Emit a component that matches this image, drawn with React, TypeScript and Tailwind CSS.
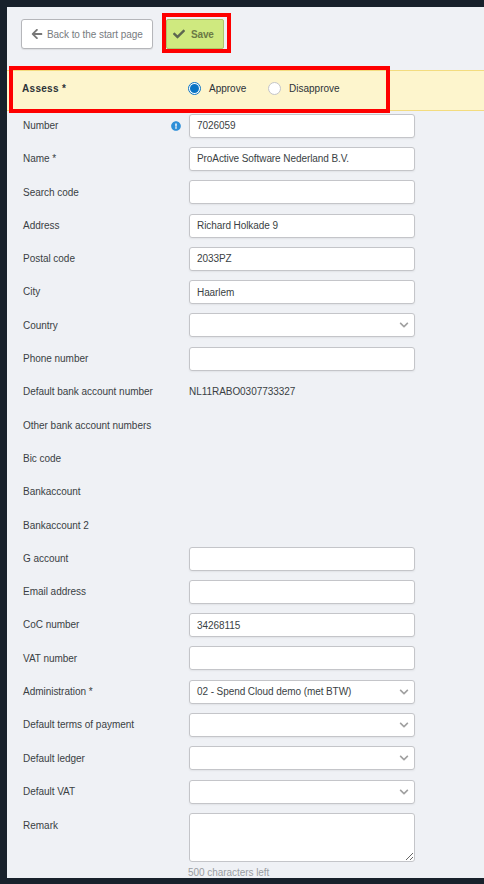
import React from 'react';
import { FaArrowLeft, FaCheck, FaChevronDown, FaExclamationCircle } from 'react-icons/fa';

type Field = {
  label: string;
  kind: 'input' | 'select' | 'static';
  value?: string;
  info?: boolean;
};

const fields: Field[] = [
  { label: 'Number', kind: 'input', value: '7026059', info: true },
  { label: 'Name *', kind: 'input', value: 'ProActive Software Nederland B.V.' },
  { label: 'Search code', kind: 'input' },
  { label: 'Address', kind: 'input', value: 'Richard Holkade 9' },
  { label: 'Postal code', kind: 'input', value: '2033PZ' },
  { label: 'City', kind: 'input', value: 'Haarlem' },
  { label: 'Country', kind: 'select' },
  { label: 'Phone number', kind: 'input' },
  { label: 'Default bank account number', kind: 'static', value: 'NL11RABO0307733327' },
  { label: 'Other bank account numbers', kind: 'static' },
  { label: 'Bic code', kind: 'static' },
  { label: 'Bankaccount', kind: 'static' },
  { label: 'Bankaccount 2', kind: 'static' },
  { label: 'G account', kind: 'input' },
  { label: 'Email address', kind: 'input' },
  { label: 'CoC number', kind: 'input', value: '34268115' },
  { label: 'VAT number', kind: 'input' },
  { label: 'Administration *', kind: 'select', value: '02 - Spend Cloud demo (met BTW)' },
  { label: 'Default terms of payment', kind: 'select' },
  { label: 'Default ledger', kind: 'select' },
  { label: 'Default VAT', kind: 'select' },
];

const boxClass =
  'h-[24px] w-[226px] rounded-[3px] border border-[#c4c5c9] bg-white px-[7px] flex items-center justify-between text-[10px] tracking-[-0.08px] text-[#3a3f44] shadow-[0_1px_2px_rgba(0,0,0,0.06)]';

const FormRow = ({ field }: { field: Field }) => (
  <div className="flex h-[33.3px] items-center">
    <div className="flex w-[166px] items-center justify-between pr-[8px] text-[#3a3f44]">
      <span className="-mt-[0.4px] whitespace-nowrap tracking-[-0.03px]">{field.label}</span>
      {field.info && <FaExclamationCircle className="h-[10px] w-[10px] text-[#2e8fd8]" />}
    </div>
    {field.kind === 'static' ? (
      <span className="-mt-[0.4px] tracking-[-0.05px] text-[#3a3f44]">{field.value}</span>
    ) : (
      <div className={boxClass}>
        <span className="whitespace-nowrap">{field.value}</span>
        {field.kind === 'select' && <FaChevronDown className="-mr-[2px] h-[10px] w-[10px] text-[#a0a0a0]" />}
      </div>
    )}
  </div>
);

export default function App() {
  return (
    <div className="relative h-[884px] w-[484px] overflow-hidden bg-[#18212b] pl-[7px] pt-[7px] font-['Liberation_Sans',Arial,sans-serif] text-[10px]">
      <div className="h-[871px] w-[477px] bg-[#eff1f5]">
        {/* Toolbar */}
        <div className="flex items-start gap-[13px] pl-[14px] pt-[12px]">
          <button className="flex h-[30px] w-[132px] items-center gap-[4px] rounded-[3px] border border-[#b5b6ba] bg-white pl-[9px] text-[10px] tracking-[-0.07px] text-[#777b80] shadow-[0_1px_1px_rgba(0,0,0,0.08)]">
            <FaArrowLeft className="h-[12px] w-[12px] text-[#777777]" />
            <span className="whitespace-nowrap">Back to the start page</span>
          </button>
          <button className="flex h-[30px] w-[58px] items-center gap-[6px] rounded-[2px] border border-[#aec46a] bg-[#cfe97f] pl-[6px] text-[10px] font-bold tracking-[-0.15px] text-[#6c7a45]">
            <FaCheck className="h-[12px] w-[12px] text-[#5c6650]" />
            <span>Save</span>
          </button>
        </div>

        {/* Assess */}
        <div className="mt-[21px] flex h-[41px] items-center border-y border-[#f3dc7f] bg-[#fdf5cd] pb-[5px] pl-[15px] text-[#2c3238]">
          <span className="w-[166px] font-bold tracking-[0.3px]">Assess *</span>
          <span className="flex h-[13px] w-[13px] items-center justify-center rounded-full border border-[#0a74c4] bg-white">
            <span className="h-[9px] w-[9px] rounded-full bg-[#0a74c4]" />
          </span>
          <span className="ml-[8px] w-[37px]">Approve</span>
          <span className="ml-[22px] h-[13px] w-[13px] rounded-full border border-[#c4c5c9] bg-white" />
          <span className="ml-[8px]">Disapprove</span>
        </div>

        {/* Form */}
        <div className="-mt-[2px] pl-[16px]">
          {fields.map((field) => (
            <FormRow key={field.label} field={field} />
          ))}
          <div className="flex pt-[4.4px]">
            <span className="w-[166px] pt-[5px] text-[#3a3f44]">Remark</span>
            <div>
              <textarea
                readOnly
                className="block h-[49px] w-[226px] rounded-[3px] border border-[#c4c5c9] bg-white"
              />
              <div className="-ml-[1px] mt-[3px] whitespace-nowrap tracking-[-0.05px] text-[#9a9da1]">500 characters left</div>
            </div>
          </div>
        </div>
      </div>

      {/* Annotation boxes over the page */}
      <div className="absolute left-[162px] top-[13px] h-[40px] w-[69px] border-[4px] border-[#fe0000]" />
      <div className="absolute left-[9px] top-[66px] h-[47px] w-[381px] border-[4px] border-[#fe0000]" />
    </div>
  );
}
